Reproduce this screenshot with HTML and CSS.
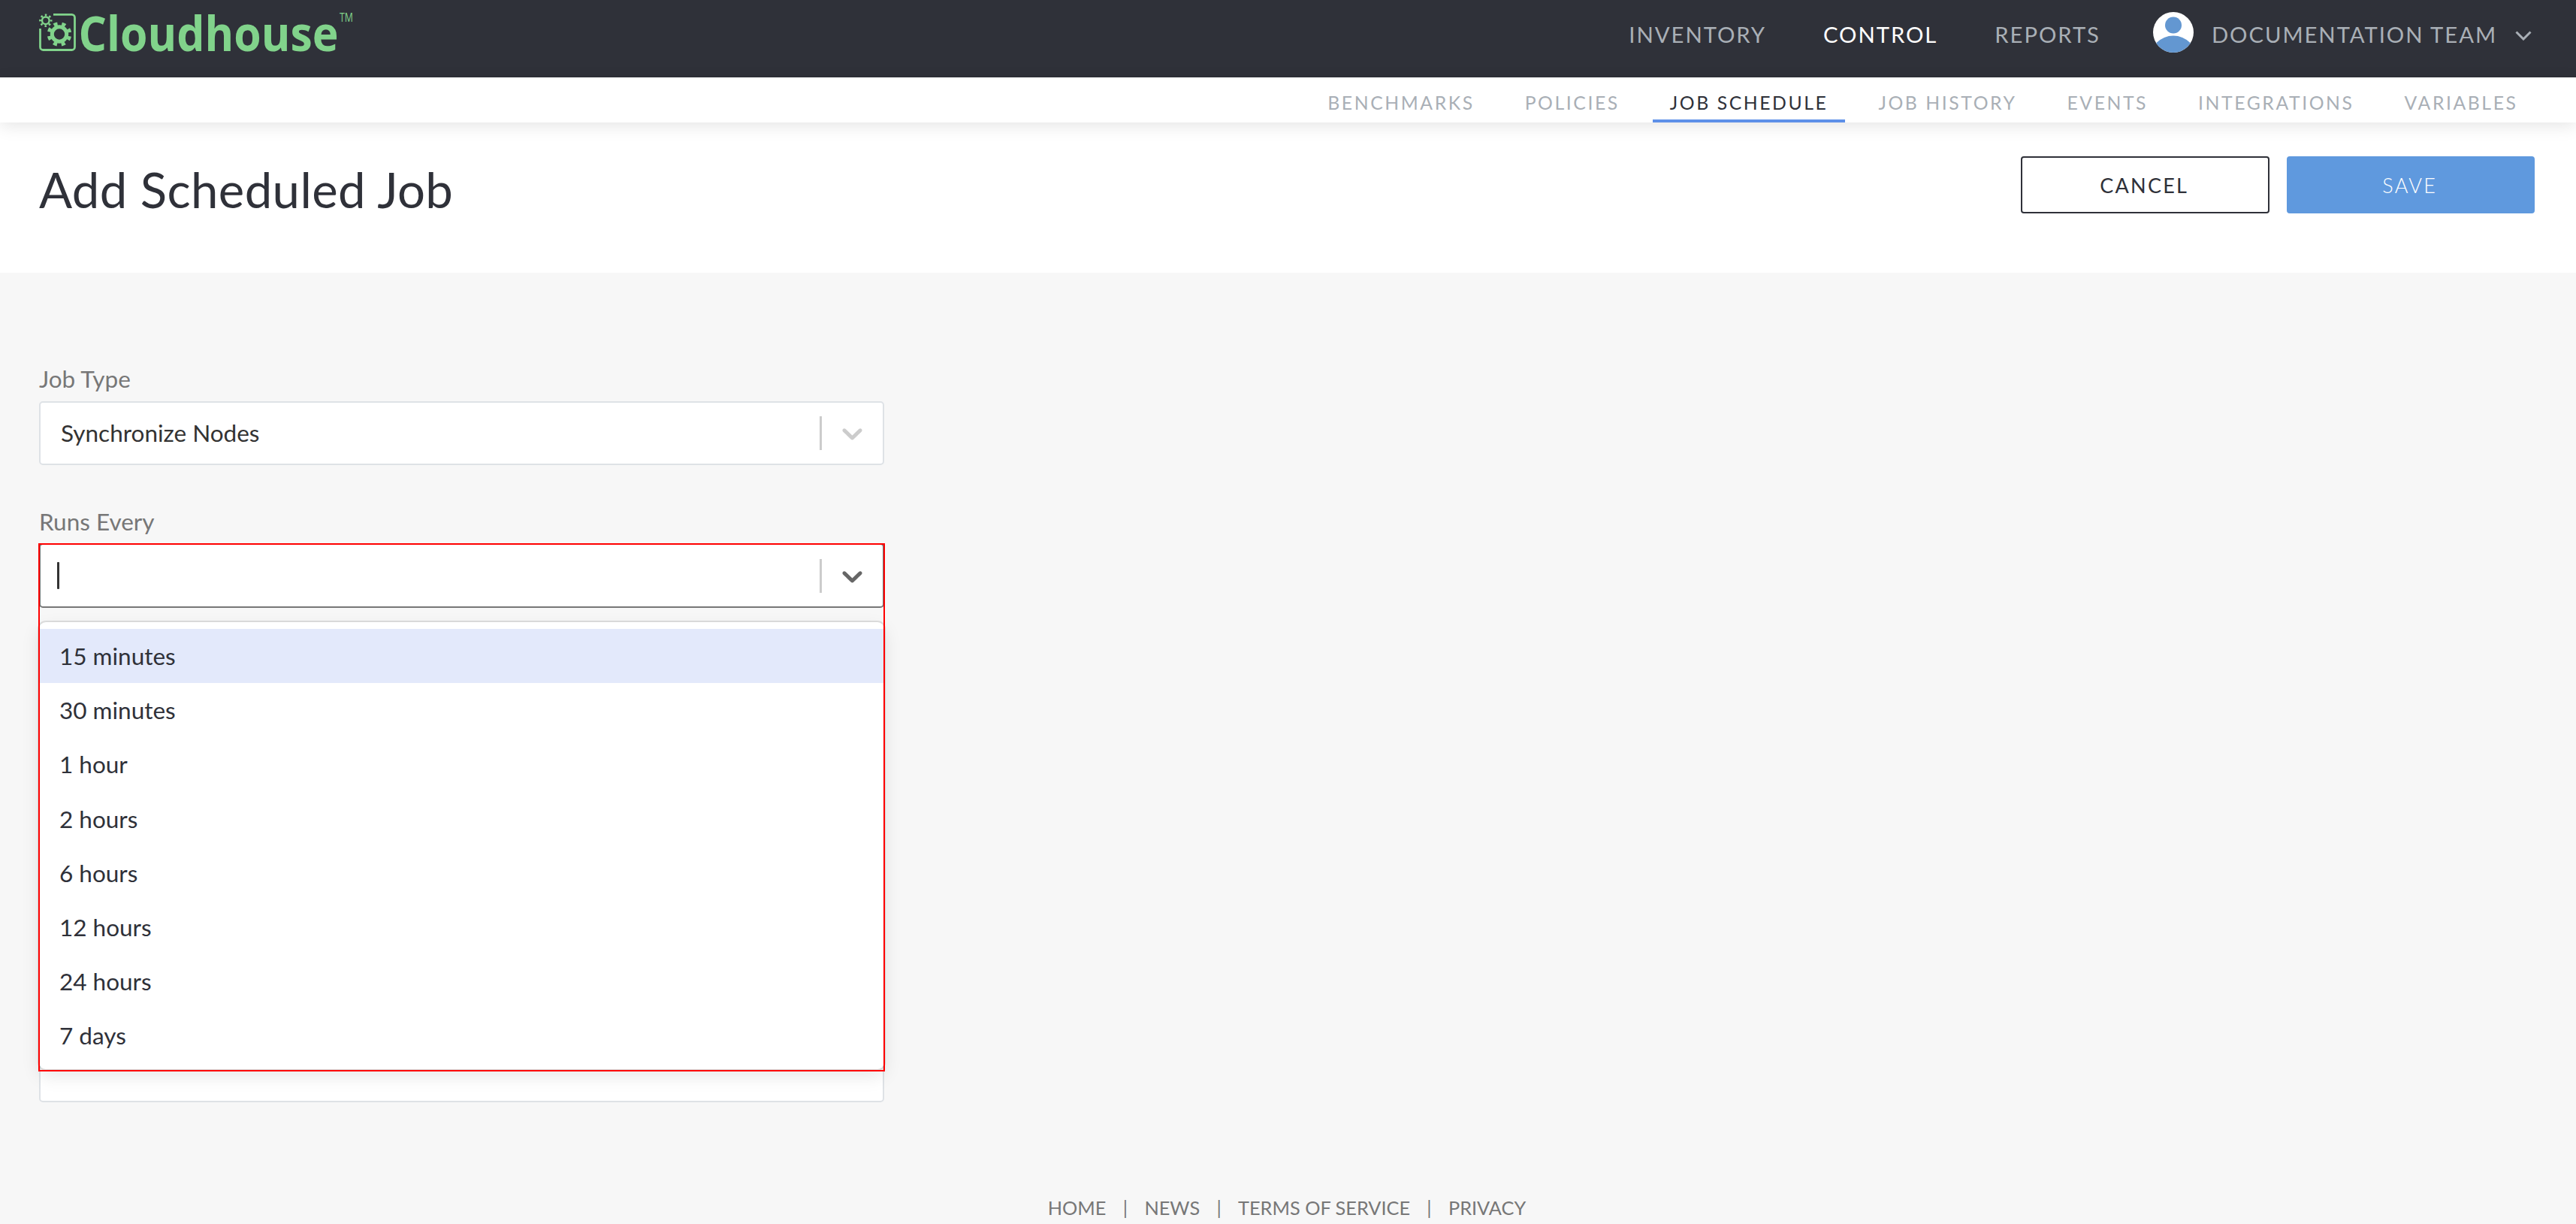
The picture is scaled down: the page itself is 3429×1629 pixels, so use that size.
FILE: index.html
```html
<!DOCTYPE html>
<html lang="en">
<head>
    <meta charset="UTF-8">
    <meta name="viewport" content="width=device-width, initial-scale=1.0">
    <title>Add Scheduled Job - Cloudhouse</title>
    <link rel="stylesheet" href="styles.css">
</head>
<body>
<header class="topbar">
    <a class="logo" href="#">
        <svg width="420" height="54" viewBox="52 16 420 54">
            <g fill="none" stroke="#81d38b" stroke-width="2.8">
                <path d="M71 19.4H95.5a4 4 0 0 1 4 4V62.5a4 4 0 0 1-4 4H57.5a4 4 0 0 1-4-4V38"/>
                <circle cx="60.8" cy="27.3" r="4.8" stroke-width="2.4"/>
                <circle cx="60.8" cy="27.3" r="7.3" stroke-dasharray="2.5 3.233" stroke-dashoffset="1.25"/>
                <circle cx="79" cy="45.5" r="9.7" stroke-width="5"/>
                <circle cx="79" cy="45.5" r="13.8" stroke-width="5" stroke-dasharray="5 5.838" stroke-dashoffset="-2.92"/>
            </g>
            <text class="wordmark" x="104.5" y="67.5" textLength="346" lengthAdjust="spacingAndGlyphs">Cloudhouse</text>
            <text class="trademark" x="452" y="29" textLength="18" lengthAdjust="spacingAndGlyphs">TM</text>
        </svg>
    </a>
    <nav class="main-nav">
        <a href="#">INVENTORY</a>
        <a class="active" href="#">CONTROL</a>
        <a href="#">REPORTS</a>
    </nav>
    <div class="user">
        <svg class="avatar" width="54" height="54" viewBox="0 0 54 54">
            <clipPath id="avatarClip"><circle cx="27" cy="27" r="27"/></clipPath>
            <g clip-path="url(#avatarClip)">
                <rect width="54" height="54" fill="#fff"/>
                <circle cx="27" cy="17.5" r="11" fill="#6397d1"/>
                <circle cx="27" cy="63" r="31.5" fill="#6397d1"/>
            </g>
        </svg>
        <span>DOCUMENTATION TEAM</span>
        <svg class="user-arrow" width="22" height="13" viewBox="0 0 22 13"><path d="M1.5 1.5L11 11L20.5 1.5" fill="none" stroke="#a9afb6" stroke-width="3"/></svg>
    </div>
</header>

<nav class="sub-nav">
    <a href="#">BENCHMARKS</a>
    <a href="#">POLICIES</a>
    <a class="active" href="#">JOB SCHEDULE</a>
    <a href="#">JOB HISTORY</a>
    <a href="#">EVENTS</a>
    <a href="#">INTEGRATIONS</a>
    <a href="#">VARIABLES</a>
</nav>

<section class="page-head">
    <h1>Add Scheduled Job</h1>
    <div class="actions">
        <button class="btn btn-cancel">CANCEL</button>
        <button class="btn btn-save">SAVE</button>
    </div>
</section>

<main class="form">
    <label class="label">Job Type</label>
    <div class="select">
        <span class="value">Synchronize Nodes</span>
        <span class="separator"></span>
        <svg class="arrow" width="45" height="45" viewBox="0 0 20 20"><path d="M4.516 7.548c0.436-0.446 1.043-0.481 1.576 0l3.908 3.747 3.908-3.747c0.533-0.481 1.141-0.446 1.574 0 0.436 0.445 0.408 1.197 0 1.615-0.406 0.418-4.695 4.502-4.695 4.502-0.217 0.223-0.502 0.335-0.787 0.335s-0.570-0.112-0.789-0.335c0 0-4.287-4.084-4.695-4.502s-0.436-1.170 0-1.615z"/></svg>
    </div>

    <label class="label label-runs">Runs Every</label>
    <div class="dropdown">
        <div class="select focused">
            <span class="caret"></span>
            <span class="separator"></span>
            <svg class="arrow" width="45" height="45" viewBox="0 0 20 20"><path d="M4.516 7.548c0.436-0.446 1.043-0.481 1.576 0l3.908 3.747 3.908-3.747c0.533-0.481 1.141-0.446 1.574 0 0.436 0.445 0.408 1.197 0 1.615-0.406 0.418-4.695 4.502-4.695 4.502-0.217 0.223-0.502 0.335-0.787 0.335s-0.570-0.112-0.789-0.335c0 0-4.287-4.084-4.695-4.502s-0.436-1.170 0-1.615z"/></svg>
        </div>
        <ul class="menu">
            <li class="hover">15 minutes</li>
            <li>30 minutes</li>
            <li>1 hour</li>
            <li>2 hours</li>
            <li>6 hours</li>
            <li>12 hours</li>
            <li>24 hours</li>
            <li>7 days</li>
        </ul>
        <div class="highlight"></div>
    </div>

    <div class="select last"></div>
</main>

<footer class="footer">
    <a href="#">HOME</a><span class="bar">|</span><a href="#">NEWS</a><span class="bar">|</span><a href="#">TERMS OF SERVICE</a><span class="bar">|</span><a href="#">PRIVACY</a>
</footer>
</body>
</html>
```
FILE: styles.css
```css
:root {
    --dark: #2f3139;
    --muted: #a9afb6;
    --blue: #5f99de;
    --border: #dee2e6;
    --page-bg: #f7f7f7;
}

* {
    margin: 0;
    padding: 0;
    box-sizing: border-box;
}

body {
    font-family: Lato, sans-serif;
    background: var(--page-bg);
    color: var(--dark);
    height: 1629px;
    overflow: hidden;
}

a {
    color: inherit;
    text-decoration: none;
}

/* Top bar */
.topbar {
    display: flex;
    align-items: flex-start;
    height: 103px;
    padding: 16px 59px 0 52px;
    background: var(--dark);
    color: var(--muted);
    font-size: 29.25px;
    line-height: 60px;
    letter-spacing: 1.95px;
}

.logo {
    height: 54px;
    line-height: 0;
}

.logo svg {
    overflow: visible;
}

.wordmark {
    font: 700 64.5px "Open Sans", sans-serif;
    letter-spacing: 0;
    fill: #81d38b;
}

.trademark {
    font: 400 15.5px "Open Sans", sans-serif;
    letter-spacing: 0;
    fill: #81d38b;
}

.main-nav {
    display: flex;
    gap: 76px;
    margin-left: auto;
}

.main-nav .active {
    color: #fff;
}

.user {
    display: flex;
    margin-left: 70px;
}

.avatar {
    margin-right: 24px;
}

.user-arrow {
    margin: 25px 0 0 24px;
}

/* Section tabs */
.sub-nav {
    position: relative;
    display: flex;
    justify-content: flex-end;
    gap: 22px;
    height: 60px;
    padding-right: 55px;
    background: #fff;
    color: var(--muted);
    font-size: 24.75px;
    line-height: 68px;
    letter-spacing: 2.57px;
    box-shadow: 0 5px 22px rgba(0, 0, 0, 0.1);
}

.sub-nav a {
    height: 60px;
    padding: 0 22.5px;
}

.sub-nav .active {
    color: var(--dark);
    border-bottom: 4px solid #5e90e8;
}

/* Title and buttons */
.page-head {
    display: flex;
    justify-content: space-between;
    height: 200px;
    padding: 45px 55px 0 52px;
    background: #fff;
}

h1 {
    font-size: 65.25px;
    font-weight: 400;
    line-height: 88px;
    letter-spacing: 0.4px;
}

.actions {
    display: flex;
    gap: 23px;
}

.btn {
    width: 330.5px;
    height: 76px;
    padding-right: 2px;
    border: 2px solid var(--dark);
    border-radius: 4px;
    background: #fff;
    color: var(--dark);
    font: 400 27px Lato, sans-serif;
    letter-spacing: 2.25px;
}

.btn-save {
    border-color: var(--blue);
    background: var(--blue);
    color: #fff;
    font-weight: 300;
}

/* Form */
.form {
    width: 1177px;
    padding: 117px 0 0 52px;
}

.label {
    display: block;
    height: 54px;
    color: #777;
    font-size: 31.5px;
    line-height: 48px;
}

.label-runs {
    line-height: 50px;
}

.select {
    display: flex;
    align-items: center;
    height: 85px;
    margin-bottom: 50px;
    padding: 0 18px 0 27px;
    border: 2px solid var(--border);
    border-radius: 5px;
    background: #fff;
    color: #333;
    font-size: 31.5px;
}

.value {
    padding-bottom: 1px;
}

.separator {
    width: 3px;
    height: 45px;
    margin: 0 18px 0 auto;
    background: #ccc;
}

.arrow {
    fill: #ccc;
}

.dropdown {
    position: relative;
}

.focused {
    height: 86px;
    margin-bottom: 0;
    padding-left: 22px;
    border-color: #777;
}

.focused .arrow {
    fill: #666;
}

.caret {
    width: 3px;
    height: 36px;
    border-radius: 1px;
    background: #333;
}

.menu {
    position: absolute;
    top: 105px;
    left: 0;
    z-index: 1;
    width: 100%;
    height: 595px;
    padding: 9px 0;
    border-radius: 9px;
    background: #fff;
    box-shadow: 0 0 0 2px rgba(0, 0, 0, 0.1), 0 9px 25px rgba(0, 0, 0, 0.1);
    font-size: 31.5px;
    line-height: 72.2px;
    list-style: none;
}

.menu li {
    height: 72.2px;
    padding-left: 27px;
}

.menu .hover {
    background: #e3e9fb;
}

/* Red outline around the open dropdown */
.highlight {
    position: absolute;
    top: 0;
    left: -1px;
    z-index: 2;
    width: 1127px;
    height: 703px;
    border: 2px solid #f00;
}

.last {
    margin-top: 573px;
}

/* Footer */
.footer {
    display: flex;
    justify-content: center;
    margin-top: 120px;
    padding-right: 3px;
    color: #777;
    font-size: 25.3px;
    line-height: 40px;
}

.bar {
    margin: 0 22.3px;
}
```
